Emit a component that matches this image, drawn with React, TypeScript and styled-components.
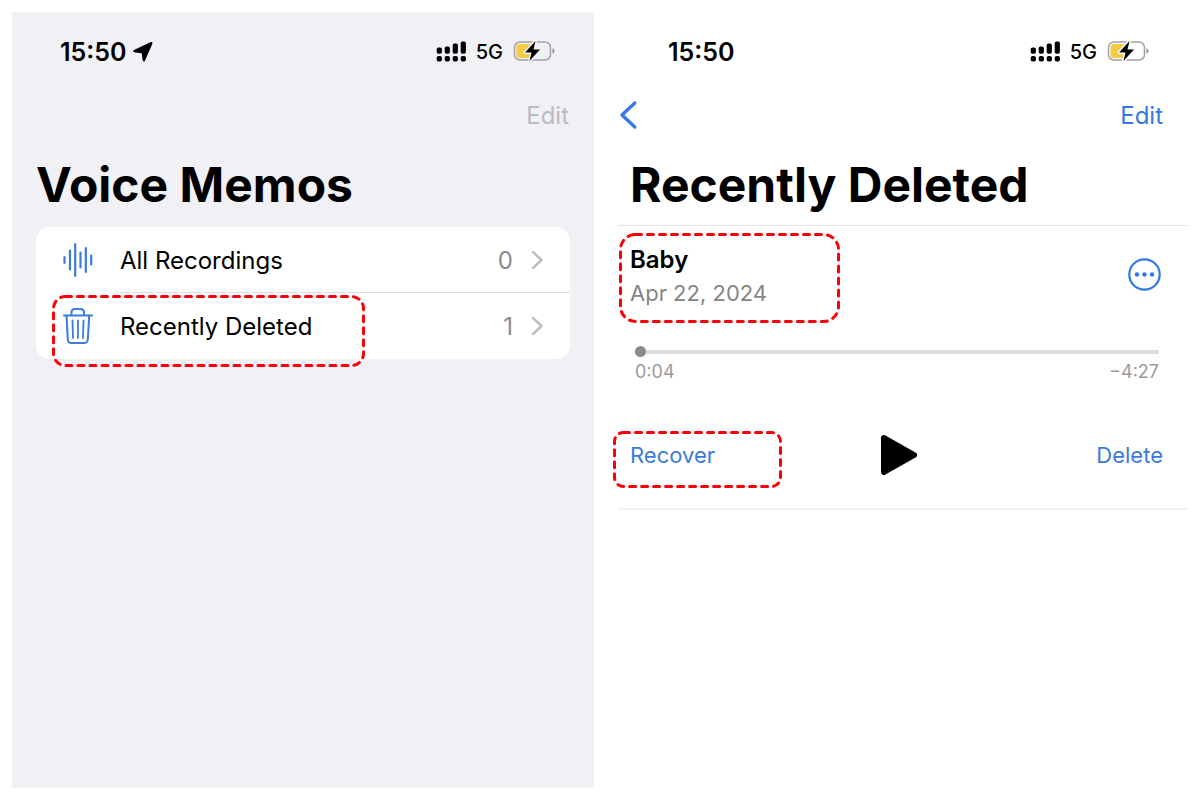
import React from "react";
import styled, { createGlobalStyle } from "styled-components";

const GlobalStyle = createGlobalStyle`
  *, *::before, *::after { box-sizing: border-box; }
  body {
    margin: 0;
    background: #ffffff;
    color: #000000;
    font-family: Inter, "Liberation Sans", sans-serif;
  }
  button {
    margin: 0;
    padding: 0;
    border: 0;
    background: none;
    color: inherit;
    font: inherit;
    cursor: pointer;
  }
  svg { display: block; }
`;

const Page = styled.div`
  min-height: 100vh;
  padding: 12px;
  display: grid;
  grid-template-columns: 97fr 99fr;
`;

const Screen = styled.section<{ $tinted?: boolean }>`
  display: flex;
  flex-direction: column;
  min-width: 0;
  padding: 24px 0 24px 24px;
  background: ${(p) => (p.$tinted ? "#f1f0f5" : "#ffffff")};
`;

const StatusBar = styled.div<{ $inset: number }>`
  display: flex;
  align-items: center;
  justify-content: space-between;
  height: 30px;
  padding: 0 39px 0 ${(p) => p.$inset}px;
`;

const Clock = styled.div`
  display: flex;
  align-items: center;
  gap: 7px;
  padding-top: 2px;
  font-size: 25px;
  font-weight: 600;
  line-height: 30px;
`;

const StatusIcons = styled.div`
  display: flex;
  align-items: center;
  gap: 10px;
`;

const Network = styled.span`
  padding-top: 2px;
  font-size: 20px;
  font-weight: 500;
  line-height: 28px;
`;

const NavBar = styled.nav`
  display: flex;
  align-items: center;
  height: 32px;
  margin-top: 34px;
  padding-right: 25px;
`;

const NavButton = styled.button`
  margin-left: auto;
  color: #3478e5;
  font-size: 24px;
  line-height: 32px;

  &:disabled {
    color: #bcbbc0;
    cursor: default;
  }
`;

const BackButton = styled.button`
  padding-bottom: 2px;
`;

const Title = styled.h1<{ $inset: number }>`
  margin: 23px 0 0;
  padding-left: ${(p) => p.$inset}px;
  font-size: 48px;
  font-weight: 700;
  line-height: 60px;
  white-space: nowrap;
`;

const Card = styled.ul`
  margin: 12px 24px 0 0;
  padding: 0;
  list-style: none;
  background: #ffffff;
  border-radius: 14px;
`;

const Folder = styled.li`
  position: relative;
`;

const FolderButton = styled.button`
  display: flex;
  align-items: center;
  width: 100%;
  height: 66px;
  padding-left: 26px;
  text-align: left;
  font-size: 24px;
  line-height: 30px;
`;

const FolderBody = styled.span<{ $divided?: boolean }>`
  flex: 1;
  display: flex;
  align-items: center;
  height: 66px;
  margin-left: 26px;
  padding-right: 26px;
  border-bottom: ${(p) => (p.$divided ? "1px solid #dcdcde" : "0")};
`;

const FolderName = styled.span`
  padding-top: 2px;
`;

const FolderCount = styled.span`
  margin: 0 18px 0 auto;
  padding-top: 2px;
  color: #8a8a8e;
`;

const Frame = styled.svg<{ $top: number; $left: number; $width: number; $height: number }>`
  position: absolute;
  top: ${(p) => p.$top}px;
  left: ${(p) => p.$left}px;
  width: ${(p) => p.$width}px;
  height: ${(p) => p.$height}px;
  pointer-events: none;
`;

const Memo = styled.article`
  margin-top: 10px;
  padding: 19px 0 31px;
  border-top: 1px solid #e3e3e4;
  border-bottom: 2px solid #f2f2f2;
`;

const MemoHeader = styled.header`
  position: relative;
  display: flex;
  align-items: flex-start;
  justify-content: space-between;
  padding: 0 27px 0 12px;
`;

const MoreButton = styled.button`
  padding-top: 12px;
`;

const MemoName = styled.h2`
  margin: 0;
  font-size: 24px;
  font-weight: 600;
  line-height: 30px;
`;

const MemoDate = styled.time`
  display: block;
  margin-top: 3px;
  color: #858585;
  font-size: 22px;
  line-height: 30px;
`;

const Player = styled.div`
  margin-top: 38px;
  padding: 0 29px 0 17px;
`;

const Scrubber = styled.input`
  appearance: none;
  display: block;
  width: 100%;
  height: 11px;
  margin: 0;
  background: linear-gradient(#dddddd, #dddddd) center / 100% 4px no-repeat;

  &::-webkit-slider-thumb {
    appearance: none;
    width: 11px;
    height: 11px;
    border-radius: 50%;
    background: #8b8b8b;
  }
`;

const Times = styled.div`
  display: flex;
  justify-content: space-between;
  margin-top: 4px;
  color: #9b9b9b;
  font-size: 18px;
  line-height: 22px;
`;

const Controls = styled.div`
  position: relative;
  display: grid;
  grid-template-columns: 1fr auto 1fr;
  align-items: center;
  height: 44px;
  margin-top: 50px;
  padding: 0 25px 0 12px;
`;

const PlayButton = styled.button`
  padding-left: 4px;
`;

const TextButton = styled.button<{ $end?: boolean }>`
  justify-self: ${(p) => (p.$end ? "end" : "start")};
  color: #3b7bdb;
  font-size: 22px;
  line-height: 30px;
`;

type HighlightProps = { top: number; left: number; width: number; height: number; radius: number };

function Highlight({ top, left, width, height, radius }: HighlightProps) {
  return (
    <Frame $top={top} $left={left} $width={width} $height={height} aria-hidden="true">
      <rect
        x="1.5"
        y="1.5"
        width={width - 3}
        height={height - 3}
        rx={radius}
        fill="none"
        stroke="#fb0007"
        strokeWidth="3"
        strokeLinecap="round"
        strokeDasharray="6 6"
      />
    </Frame>
  );
}

function LocationIcon() {
  return (
    <svg width="20" height="20" viewBox="0 0 20 20" aria-hidden="true">
      <path
        d="M1.5 9 18.3 1.2 10.8 18.2 9.8 10.2Z"
        stroke="#000"
        strokeWidth="2.4"
        strokeLinejoin="round"
      />
    </svg>
  );
}

function SignalIcon() {
  const tops = [6, 5, 2, 0];
  return (
    <svg width="30" height="21" viewBox="0 0 30 21" aria-hidden="true">
      {tops.map((top, i) => (
        <g key={top}>
          <rect x={i * 8 + 0.7} y={top + 0.5} width="5.2" height={12.2 - top} rx="1.8" />
          <rect x={i * 8 + 0.7} y="15" width="5.2" height="5.5" rx="1.8" />
        </g>
      ))}
    </svg>
  );
}

function BatteryIcon({ backdrop }: { backdrop: string }) {
  return (
    <svg width="42" height="22" viewBox="0 0 42 22" aria-hidden="true">
      <rect x="1.5" y="2" width="36" height="18" rx="5.5" fill="none" stroke="#a2a2a5" strokeWidth="1.5" />
      <path d="M7 4H19v14H7Q3.500 18 3.500 14.500V7.500Q3.500 4 7 4Z" fill="#f3cb45" />
      <path d="M39.500 8.200q2 .8 2 2.800t-2 2.800Z" fill="#8f8f92" />
      <path
        d="M22.500 1 12 12.500h6.500L16.500 21 27 9.500h-6.500Z"
        fill="#000"
        stroke={backdrop}
        strokeWidth="3"
        strokeLinejoin="round"
        paintOrder="stroke"
      />
    </svg>
  );
}

function WaveformIcon() {
  const bars: [number, number][] = [
    [2.5, 4], [8, 10.5], [13.2, 17], [18.5, 8.5], [23.8, 13], [29.2, 5.5],
  ];
  return (
    <svg width="32" height="36" viewBox="0 0 32 36" aria-hidden="true">
      {bars.map(([x, half]) => (
        <line
          key={x}
          x1={x}
          x2={x}
          y1={19 - half}
          y2={17 + half}
          stroke="#3c7bdc"
          strokeWidth="2.2"
          strokeLinecap="round"
        />
      ))}
    </svg>
  );
}

function TrashIcon() {
  return (
    <svg width="32" height="38" viewBox="0 0 32 38" fill="none" stroke="#3c7be0" strokeWidth="2" strokeLinecap="round" strokeLinejoin="round" aria-hidden="true">
      <path d="M2 8.500H30" />
      <path d="M9.500 8V5.500Q9.500 2 13 2h5.500Q22 2 22 5.500V8" />
      <path d="M4.500 9 5.800 32.500Q6 36 9.500 36H22Q25.500 36 25.800 32.500L27.200 9" />
      <path d="M10.500 13.500 11 31M16 13.500V31M21.500 13.500 21 31" strokeWidth="1.800" />
    </svg>
  );
}

function ChevronIcon() {
  return (
    <svg width="13" height="20" viewBox="0 0 13 20" fill="none" aria-hidden="true">
      <path d="M2 2 10.500 10 2 18" stroke="#bfbfc2" strokeWidth="2.500" strokeLinecap="round" strokeLinejoin="round" />
    </svg>
  );
}

function BackIcon() {
  return (
    <svg width="20" height="30" viewBox="0 0 20 30" fill="none" aria-hidden="true">
      <path d="M16.800 3 4 15 16.800 27" stroke="#3579ea" strokeWidth="3.400" strokeLinecap="round" strokeLinejoin="round" />
    </svg>
  );
}

function MoreIcon() {
  return (
    <svg width="33" height="36" viewBox="0 0 33 36" fill="#3478e5" aria-hidden="true">
      <circle cx="16.500" cy="17.500" r="15.200" fill="none" stroke="#3478e5" strokeWidth="2.200" />
      <circle cx="9" cy="17.500" r="2.200" />
      <circle cx="16.500" cy="17.500" r="2.200" />
      <circle cx="24" cy="17.500" r="2.200" />
    </svg>
  );
}

function PlayIcon() {
  return (
    <svg width="38" height="42" viewBox="0 0 38 42" aria-hidden="true">
      <path d="M4 4 34 21 4 38Z" stroke="#000" strokeWidth="6" strokeLinejoin="round" />
    </svg>
  );
}

function Status({ inset, located, backdrop }: { inset: number; located?: boolean; backdrop: string }) {
  return (
    <StatusBar $inset={inset}>
      <Clock>
        15:50
        {located && <LocationIcon />}
      </Clock>
      <StatusIcons>
        <SignalIcon />
        <Network>5G</Network>
        <BatteryIcon backdrop={backdrop} />
      </StatusIcons>
    </StatusBar>
  );
}

export default function App() {
  return (
    <>
      <GlobalStyle />
      <Page>
        <Screen $tinted>
          <Status inset={24} located backdrop="#f1f0f5" />
          <NavBar>
            <NavButton disabled>Edit</NavButton>
          </NavBar>
          <Title $inset={0}>Voice Memos</Title>
          <Card>
            <Folder>
              <FolderButton>
                <WaveformIcon />
                <FolderBody $divided>
                  <FolderName>All Recordings</FolderName>
                  <FolderCount>0</FolderCount>
                  <ChevronIcon />
                </FolderBody>
              </FolderButton>
            </Folder>
            <Folder>
              <FolderButton>
                <TrashIcon />
                <FolderBody>
                  <FolderName>Recently Deleted</FolderName>
                  <FolderCount>1</FolderCount>
                  <ChevronIcon />
                </FolderBody>
              </FolderButton>
              <Highlight top={2} left={16} width={313} height={72} radius={12} />
            </Folder>
          </Card>
        </Screen>

        <Screen>
          <Status inset={50} backdrop="#ffffff" />
          <NavBar>
            <BackButton aria-label="Back">
              <BackIcon />
            </BackButton>
            <NavButton>Edit</NavButton>
          </NavBar>
          <Title $inset={12}>Recently Deleted</Title>
          <Memo>
            <MemoHeader>
              <div>
                <MemoName>Baby</MemoName>
                <MemoDate dateTime="2024-04-22">Apr 22, 2024</MemoDate>
              </div>
              <MoreButton aria-label="More options">
                <MoreIcon />
              </MoreButton>
              <Highlight top={-12} left={1} width={221} height={90} radius={15} />
            </MemoHeader>
            <Player>
              <Scrubber type="range" min={0} max={271} defaultValue={0} aria-label="Playback position" />
              <Times>
                <span>0:04</span>
                <span>−4:27</span>
              </Times>
            </Player>
            <Controls>
              <TextButton>Recover</TextButton>
              <PlayButton aria-label="Play">
                <PlayIcon />
              </PlayButton>
              <TextButton $end>Delete</TextButton>
              <Highlight top={-2} left={-5} width={169} height={57} radius={9} />
            </Controls>
          </Memo>
        </Screen>
      </Page>
    </>
  );
}
